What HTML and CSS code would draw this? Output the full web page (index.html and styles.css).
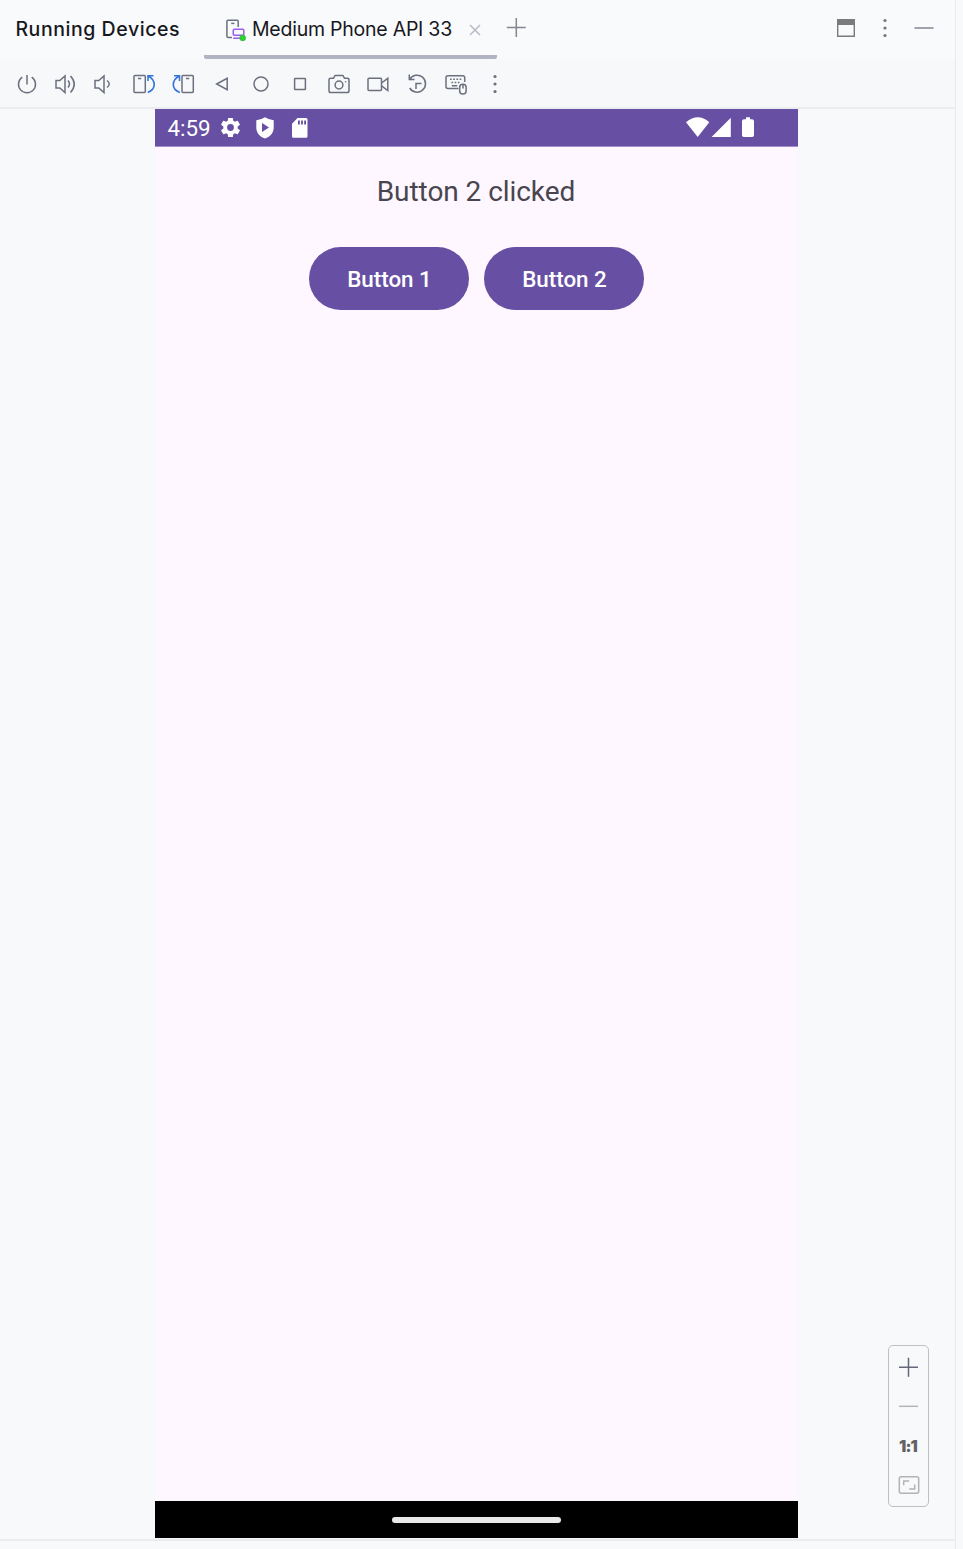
FILE: index.html
```html
<!DOCTYPE html>
<html lang="en">
<head>
<meta charset="utf-8">
<title>Running Devices</title>
<link rel="stylesheet" href="styles.css">
</head>
<body>
<div class="window">
  <header class="header">
    <h1 class="title">Running Devices</h1>
    <div class="tab">
      <svg class="tab-icon" width="22" height="24" viewBox="0 0 22 24">
        <path d="M6 19.500H2.200Q.900 19.500 .900 18V3.200Q.900 2.200 1.900 2.200H11.200Q12.200 2.200 12.200 3.200V9" stroke="#6c707e"/>
        <path d="M5.200 5.400h3.200" stroke="#6c707e"/>
        <rect x="7.300" y="11.200" width="10.500" height="6" rx="1" stroke="#9a5df0"/>
        <path d="M7.200 20.200h7" stroke="#9a5df0"/>
        <circle cx="16.700" cy="19.900" r="2.900" fill="#28d62c" stroke="#3faa48" stroke-width=".7"/>
      </svg>
      <span class="tab-label">Medium Phone API 33</span>
      <svg class="tab-close" width="12" height="12" viewBox="0 0 12 12"><path d="M1 1l10 10M11 1L1 11"/></svg>
    </div>
    <svg class="add" width="20" height="20" viewBox="0 0 20 20"><path d="M10.300 .9v19M.800 10.400h19"/></svg>
    <div class="window-actions">
      <svg width="18" height="18" viewBox="0 0 18 18"><path d="M.7.7h16.6v16.6H.7z" stroke="#7b7b7e" stroke-width="1.4"/><path d="M0 0h18v6H0z" fill="#7b7b7e"/></svg>
      <svg class="more" width="4" height="20" viewBox="0 0 4 20"><g fill="#74767f"><circle cx="2" cy="2.5" r="1.6"/><circle cx="2" cy="10" r="1.6"/><circle cx="2" cy="17.5" r="1.6"/></g></svg>
      <svg width="20" height="4" viewBox="0 0 20 4"><path d="M.5 2h19" stroke="#92939d" stroke-width="1.7"/></svg>
    </div>
  </header>

  <nav class="toolbar">
    <svg viewBox="0 0 39 28"><path d="M20 5v9.500M15.300 7.200a8.500 8.500 0 1 0 9.400 0"/></svg>
    <svg viewBox="0 0 39 28"><path d="M10 10.500h3.800L19 6v16.500l-5.200-4.500H10zM22 10.500q3 3.500 0 7M24.500 6q7.500 8.200 0 16.500"/></svg>
    <svg viewBox="0 0 39 28"><path d="M10 10.500h3.800L19 6v16.500l-5.200-4.500H10zM22 10.500q4.500 3.500 0 7"/></svg>
    <svg viewBox="0 0 39 28"><rect x="10" y="5.500" width="11.300" height="17" rx="1"/><path d="M14 8.500h3.200"/><path class="turn" d="M24 11V5.700h5.500M24.300 6c8 4.500 8 13-.6 16.600"/></svg>
    <svg viewBox="0 0 39 28"><rect x="19" y="5.500" width="11.300" height="17" rx="1"/><path d="M23 8.500h3.200"/><path class="turn" d="M16.500 11V5.700H11M16.200 6c-8 4.500-8 13 .6 16.600"/></svg>
    <svg viewBox="0 0 39 28"><path d="M14.700 14l10.500-5.700v11.400z"/></svg>
    <svg viewBox="0 0 39 28"><circle cx="20" cy="14" r="7"/></svg>
    <svg viewBox="0 0 39 28"><rect x="14.600" y="8.600" width="10.800" height="10.800" rx=".5"/></svg>
    <svg viewBox="0 0 39 28"><path d="M11.800 8.300h2.700l1.600-2.800h7.800l1.600 2.800h2.700q1.800 0 1.800 1.700v10.700q0 1.800-1.800 1.800H11.800q-1.800 0-1.800-1.800V10q0-1.700 1.800-1.700z"/><circle cx="20" cy="15" r="3.900"/><circle class="dot" cx="26.600" cy="11.700" r=".8"/></svg>
    <svg viewBox="0 0 39 28"><rect x="10" y="8.200" width="13.500" height="12.300" rx="1"/><path d="M23.500 13l6.300-4.700v12.200l-6.300-4.700"/></svg>
    <svg viewBox="0 0 39 28"><path d="M12.300 4.500v5h5.200M12.700 9.300A8.500 8.500 0 1 1 12.700 18M19 19v-5.500h5.500"/></svg>
    <svg viewBox="0 0 39 28"><path d="M22.500 18.500H12q-2 0-2-2V7.700q0-2 2-2h14.700q2 0 2 2v4.300M15.800 15.700h5.500"/><path d="M14 9.300h12M15.400 12.500h9" stroke-dasharray="1.700 1.500"/><path d="M27 14.500v4"/><rect x="23.700" y="14.300" width="6.400" height="9.700" rx="3"/></svg>
    <svg viewBox="0 0 39 28"><g class="dot"><circle cx="20" cy="6.500" r="1.600"/><circle cx="20" cy="14" r="1.600"/><circle cx="20" cy="21.500" r="1.600"/></g></svg>
  </nav>

  <main class="stage">
    <section class="device">
      <div class="status">
        <span class="clock">4:59</span>
        <svg class="gear" width="21" height="21" viewBox="1.500 1.500 21 21"><path fill-rule="evenodd" d="M19.140 12.940c.040-.300.060-.610.060-.940s-.020-.640-.070-.940l2.030-1.580a.49.490 0 0 0 .120-.610l-1.920-3.320a.49.490 0 0 0-.590-.220l-2.390.960a7 7 0 0 0-1.620-.940l-.360-2.540A.48.480 0 0 0 13.920 2.400h-3.840a.48.480 0 0 0-.480.410l-.360 2.540a7.300 7.300 0 0 0-1.620.940l-2.390-.960a.48.480 0 0 0-.590.220L2.740 8.870a.47.470 0 0 0 .120.610l2.030 1.580a6 6 0 0 0 0 1.880l-2.030 1.580a.49.490 0 0 0-.120.610l1.920 3.320c.120.220.370.290.590.220l2.390-.960c.500.380 1.030.700 1.620.940l.360 2.540c.050.240.240.410.480.410h3.840c.240 0 .440-.170.470-.410l.360-2.540a7 7 0 0 0 1.620-.940l2.390.960c.220.080.470 0 .590-.220l1.920-3.320a.47.470 0 0 0-.120-.610zM12 15.400a3.400 3.400 0 1 1 0-6.800 3.400 3.400 0 0 1 0 6.800z"/></svg>
        <svg class="shield" width="18" height="22" viewBox="0 0 18 22"><path fill-rule="evenodd" d="M9 .3Q13 3 17.700 3.200V10.500C17.700 16 14 19.800 9 21.600 4 19.800.300 16 .300 10.500V3.200Q5 3 9 .3zM6 6v9l7-4.500z"/></svg>
        <svg class="card" width="16" height="20" viewBox="0 0 16 20"><path fill-rule="evenodd" d="M5.500 0H14q1.500 0 1.500 1.500v16.700Q15.500 19.800 14 19.800H1.500Q0 19.800 0 18.200V5.700zM6 2.600v4h1.800v-4zm3.100 0v4h1.800v-4zm3.100 0v4H14v-4z"/></svg>
        <svg class="signals" width="69" height="22" viewBox="0 0 69 22"><path d="M0 5.200Q12-4.600 23.300 5.200L11.700 20zM25.600 20L44.800.7v19.300zM60 .3h4v2h2q2 0 2 2v14q0 1.800-1.800 1.800h-8.400q-1.800 0-1.800-1.800v-14q0-2 2-2h2z"/></svg>
      </div>
      <div class="screen">
        <p class="message">Button 2 clicked</p>
        <div class="buttons">
          <button class="pill">Button 1</button>
          <button class="pill">Button 2</button>
        </div>
      </div>
      <div class="gesture"><div class="handle"></div></div>
    </section>
    <aside class="zoom">
      <svg width="20" height="20" viewBox="0 0 20 20"><path d="M9.500 -.2v19M0 9.300h19" stroke="#65677a"/></svg>
      <svg width="20" height="20" viewBox="0 0 20 20"><path d="M0 9.300h19" stroke="#b5b5b8"/></svg>
      <span class="ratio">1:1</span>
      <svg width="22" height="20" viewBox="0 0 22 20"><rect x="1.300" y="1.700" width="19.400" height="16.600" rx="2" stroke="#b3b3b6"/><path d="M5.700 10.300V6h5.500M16.700 9.500v4.500h-5.500" stroke="#b3b3b6"/></svg>
    </aside>
  </main>
</div>
</body>
</html>
```

FILE: styles.css
```css
* { box-sizing: border-box; }

body {
  margin: 0;
  height: 1549px;
  background: #f8f9fb;
  font-family: Inter, sans-serif;
  color: #17181c;
  overflow: hidden;
}

svg {
  display: block;
  flex: none;
  overflow: visible;
  fill: none;
  stroke-width: 1.5;
}

.window {
  width: 956px;
  height: 1549px;
  border-right: 1px solid #e9eaee;
}

.header {
  display: flex;
  height: 59px;
  background: #f9fafc;
}

.title {
  width: 204px;
  margin: 0;
  padding-left: 15.4px;
  font-size: 19.5px;
  font-weight: 550;
  line-height: 58px;
  letter-spacing: 0.56px;
  white-space: nowrap;
}

.tab {
  display: flex;
  align-items: center;
  width: 293px;
  padding: 2px 0 0 22px;
  border-bottom: 4px solid #b1b5c3;
  border-radius: 2px;
}

.tab-icon { margin-right: 4px; margin-top: 2px; }

.tab-label {
  width: 217px;
  font-size: 19.5px;
  line-height: 56px;
  letter-spacing: -0.24px;
  white-space: nowrap;
}

.tab-close { stroke: #b8bac4; margin-top: 3px; }

.add {
  margin: 17px 0 0 9px;
  stroke: #85868f;
}

.window-actions {
  display: flex;
  align-items: center;
  height: 56px;
  margin-left: auto;
  padding-right: 21px;
  gap: 28px;
}

.window-actions .more { margin-right: -1px; }

.toolbar {
  display: flex;
  height: 50px;
  padding: 11px 0 0 7px;
  background: #f7f8fa;
  border-bottom: 2px solid #ebecef;
}

.toolbar svg {
  width: 39px;
  height: 28px;
  stroke: #6c707e;
  stroke-width: 1.5;
}

.toolbar .turn { stroke: #3574dc; stroke-width: 1.6; }
.toolbar .dot { fill: #6c707e; stroke: none; }

.stage {
  display: flex;
  height: 1432px;
  padding-left: 155px;
  border-bottom: 2px solid #ebecef;
}

.device {
  display: flex;
  flex-direction: column;
  width: 643px;
  height: 1429px;
  font-family: Roboto, sans-serif;
}

.status {
  display: flex;
  align-items: center;
  height: 38px;
  padding-left: 12.5px;
  background: #674fa3;
  border-bottom: 1px solid #a08fc8;
  color: #fff;
}

.status svg { fill: #fff; }

.clock {
  width: 52px;
  padding-top: 1px;
  font-size: 22.4px;
  line-height: 30px;
}

.shield { margin-left: 15.500px; }
.card { margin-left: 18px; }
.signals { margin-left: auto; margin-right: 43px; }

.screen {
  flex: 1;
  background: #fef7ff;
}

.message {
  margin: 0;
  padding: 25px 1px 0 0;
  color: #49454f;
  font-size: 28px;
  line-height: 40px;
  letter-spacing: -0.06px;
  text-align: center;
}

.buttons {
  display: flex;
  justify-content: center;
  gap: 15px;
  padding-top: 35px;
}

.pill {
  width: 160px;
  height: 63px;
  padding: 0 0 0 1px;
  border: 0;
  border-radius: 32px;
  background: #674fa3;
  color: #fff;
  font: 500 22.400px Roboto, sans-serif;
  letter-spacing: 0;
}

.gesture {
  display: flex;
  justify-content: center;
  align-items: center;
  height: 37px;
  background: #000;
}

.handle {
  width: 169px;
  height: 6px;
  border-radius: 3px;
  background: #e9e9e9;
}

.zoom {
  display: flex;
  flex-direction: column;
  align-items: center;
  justify-content: space-between;
  width: 41px;
  height: 162px;
  margin: 1236px 0 0 90px;
  padding: 12px 0 11px;
  border: 1.500px solid #bfc0c3;
  border-radius: 5px;
}

.ratio {
  padding-right: 1px;
  color: #626265;
  font-size: 16px;
  font-weight: 900;
  line-height: 20px;
  letter-spacing: -0.8px;
}
```
